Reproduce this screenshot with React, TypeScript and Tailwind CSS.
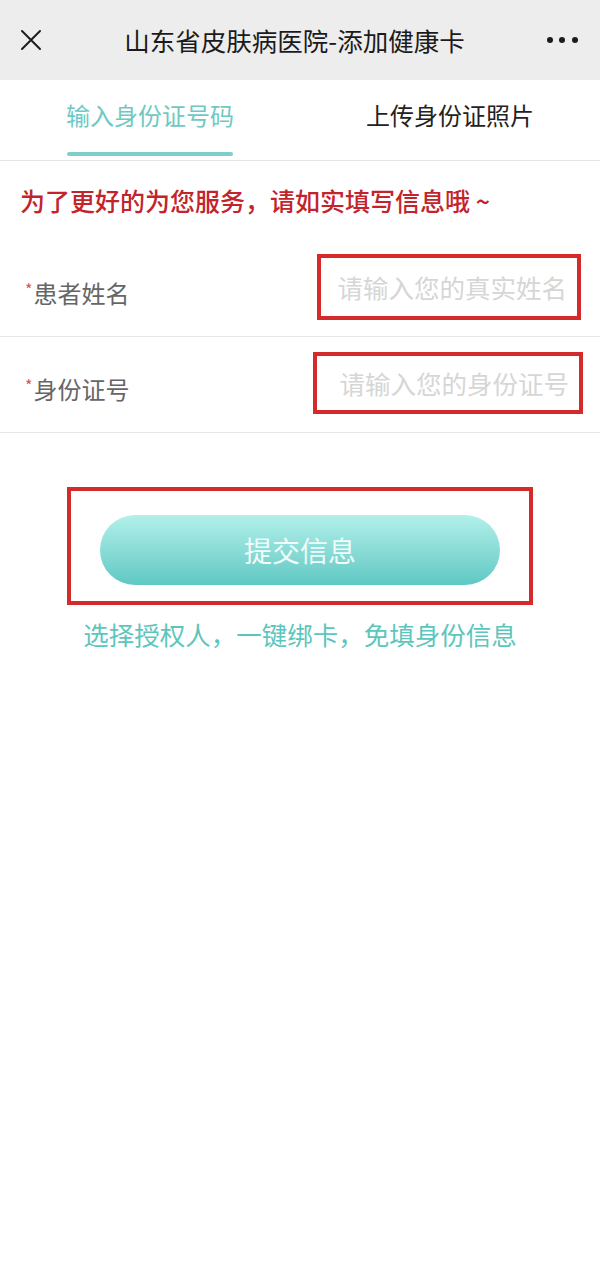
const font = "font-['Noto_Sans_CJK_SC','Noto_Sans',sans-serif]";

const Header = () => (
  <div className="flex h-[80px] items-center justify-between bg-[#ededed] pl-5 pr-[22px]">
    <svg width="22" height="22" viewBox="0 0 22 22" className="shrink-0">
      <path d="M2 2 L20 20 M20 2 L2 20" stroke="#1c1c1c" strokeWidth="2" strokeLinecap="round" />
    </svg>
    <div className="text-[25.5px] leading-none text-[#1b1b1b]">山东省皮肤病医院-添加健康卡</div>
    <div className="flex w-[31px] items-center justify-between">
      <span className="h-[6px] w-[6px] rounded-full bg-[#1c1c1c]" />
      <span className="h-[6px] w-[6px] rounded-full bg-[#1c1c1c]" />
      <span className="h-[6px] w-[6px] rounded-full bg-[#1c1c1c]" />
    </div>
  </div>
);

const Tabs = () => (
  <div className="flex h-[81px] border-b border-[#e4e4e4] bg-white">
    <div className="relative flex flex-1 items-center justify-center pb-[10px]">
      <span className="text-[24px] leading-none text-[#6ec9c3]">输入身份证号码</span>
      <div className="absolute bottom-[4px] left-[67px] h-[4px] w-[166px] rounded-full bg-[#7ecfcb]" />
    </div>
    <div className="flex flex-1 items-center justify-center pb-[10px]">
      <span className="text-[24px] leading-none text-[#222]">上传身份证照片</span>
    </div>
  </div>
);

const Row = ({ label, placeholder, box }: { label: string; placeholder: string; box: string }) => (
  <div className="flex h-[96px] items-center justify-between border-b border-[#e6e6e6] pl-[25px] pr-[19px]">
    <div className="flex items-start pt-[8px] text-[24px] leading-none text-[#666]">
      <span className="mr-[1px] text-[16px] text-[#d9534f]">*</span>
      {label}
    </div>
    <div className={`flex items-center justify-end border-[4px] border-[#d42a2a] pr-[10px] ${box}`}>
      <span className="text-[25.5px] leading-none text-[#d6d6d6]">{placeholder}</span>
    </div>
  </div>
);

export default function App() {
  return (
    <div className={`min-h-[1263px] w-[600px] bg-white ${font}`}>
      <Header />
      <Tabs />
      <div className="flex h-[80px] items-center pl-[20px] pb-[2px]">
        <span className="text-[25px] font-medium leading-none text-[#c3232b]">为了更好的为您服务，请如实填写信息哦 ~</span>
      </div>
      <Row label="患者姓名" placeholder="请输入您的真实姓名" box="mt-[-4px] h-[66px] w-[264px]" />
      <Row label="身份证号" placeholder="请输入您的身份证号" box="mt-[-4px] mr-[-2px] h-[62px] w-[270px]" />
      <div className="flex flex-col items-center pt-[54px]">
        <div className="flex h-[118px] w-[466px] items-center justify-center border-[4px] border-[#d42a2a]">
          <div className="mt-[8px] flex h-[70px] w-[400px] items-center justify-center rounded-full bg-gradient-to-b from-[#b2f0ea] to-[#5ec8c3]">
            <span className="text-[28px] leading-none text-[#f1fbfa]">提交信息</span>
          </div>
        </div>
        <div className="mt-[16px] text-[25.5px] leading-none text-[#5cc6bd]">选择授权人，一键绑卡，免填身份信息</div>
      </div>
    </div>
  );
}
